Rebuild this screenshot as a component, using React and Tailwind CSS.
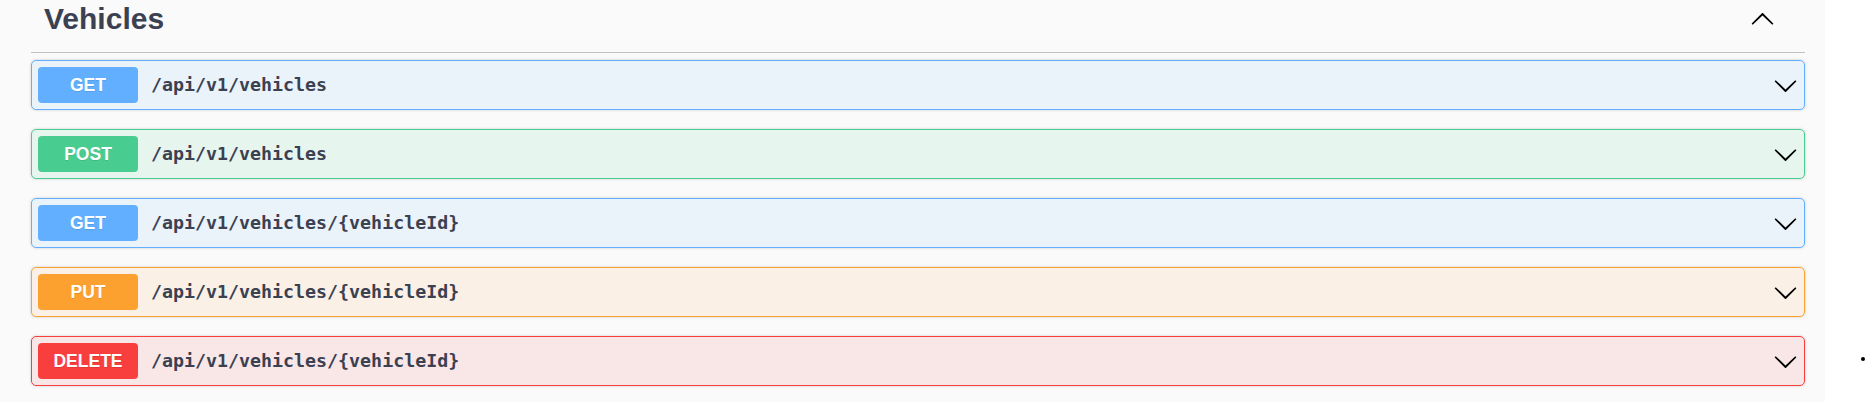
const ops = [
  { method: "GET", path: "/api/v1/vehicles", row: "border-[#61affe] bg-[rgba(97,175,254,0.1)]", badge: "bg-[#61affe]" },
  { method: "POST", path: "/api/v1/vehicles", row: "border-[#49cc90] bg-[rgba(73,204,144,0.1)]", badge: "bg-[#49cc90]" },
  { method: "GET", path: "/api/v1/vehicles/{vehicleId}", row: "border-[#61affe] bg-[rgba(97,175,254,0.1)]", badge: "bg-[#61affe]" },
  { method: "PUT", path: "/api/v1/vehicles/{vehicleId}", row: "border-[#fca130] bg-[rgba(252,161,48,0.1)]", badge: "bg-[#fca130]" },
  { method: "DELETE", path: "/api/v1/vehicles/{vehicleId}", row: "border-[#f93e3e] bg-[rgba(249,62,62,0.1)]", badge: "bg-[#f93e3e]" },
];

function Arrow({ up }) {
  return (
    <svg
      viewBox="0 0 20 20"
      width="25"
      height="25"
      className={up ? "rotate-180" : ""}
      aria-hidden="true"
    >
      <path
        fill="#000"
        d="M17.418 6.109c.272-.268.709-.268.979 0s.271.701 0 .969l-7.908 7.83c-.27.268-.707.268-.979 0l-7.908-7.83c-.27-.268-.27-.701 0-.969.271-.268.709-.268.979 0L10 13.25l7.418-7.141z"
      />
    </svg>
  );
}

export default function App() {
  return (
    <div className="flex w-[1869px] h-[402px] bg-white overflow-hidden">
      {/* swagger tag section */}
      <div className="w-[1825px] h-full bg-[#fafafa] pl-[31px] pr-[20px]">
        <div className="flex items-center justify-between h-[53px] pb-[14px] border-b border-[rgba(59,65,81,0.3)] pl-[13px] pr-[30px] mb-[7px]">
          <h3
            className="text-[30px] leading-none font-bold text-[#3b4151]"
            style={{ fontFamily: '"Liberation Sans", Arial, sans-serif' }}
          >
            Vehicles
          </h3>
          <Arrow up />
        </div>

        <div className="flex flex-col gap-[19px]">
          {ops.map((op, i) => (
            <div
              key={i}
              className={`flex items-center h-[50px] border rounded-[5px] px-[6px] shadow-[0_0_3px_rgba(0,0,0,0.19)] ${op.row}`}
            >
              <span
                className={`flex items-center justify-center w-[100px] h-[36px] rounded-[4px] text-white text-[17.5px] font-bold [text-shadow:0_1px_0_rgba(0,0,0,0.1)] ${op.badge}`}
                style={{ fontFamily: '"Liberation Sans", Arial, sans-serif' }}
              >
                {op.method}
              </span>
              <span
                className="ml-[13px] flex-1 text-[18.3px] font-bold text-[#3b4151]"
                style={{ fontFamily: '"DejaVu Sans Mono", monospace' }}
              >
                {op.path}
              </span>
              <Arrow />
            </div>
          ))}
        </div>
      </div>

      <div className="flex-1 flex flex-col pt-[357px] pl-[36px]">
        <span className="w-[4px] h-[4px] rounded-full bg-black"></span>
      </div>
    </div>
  );
}
